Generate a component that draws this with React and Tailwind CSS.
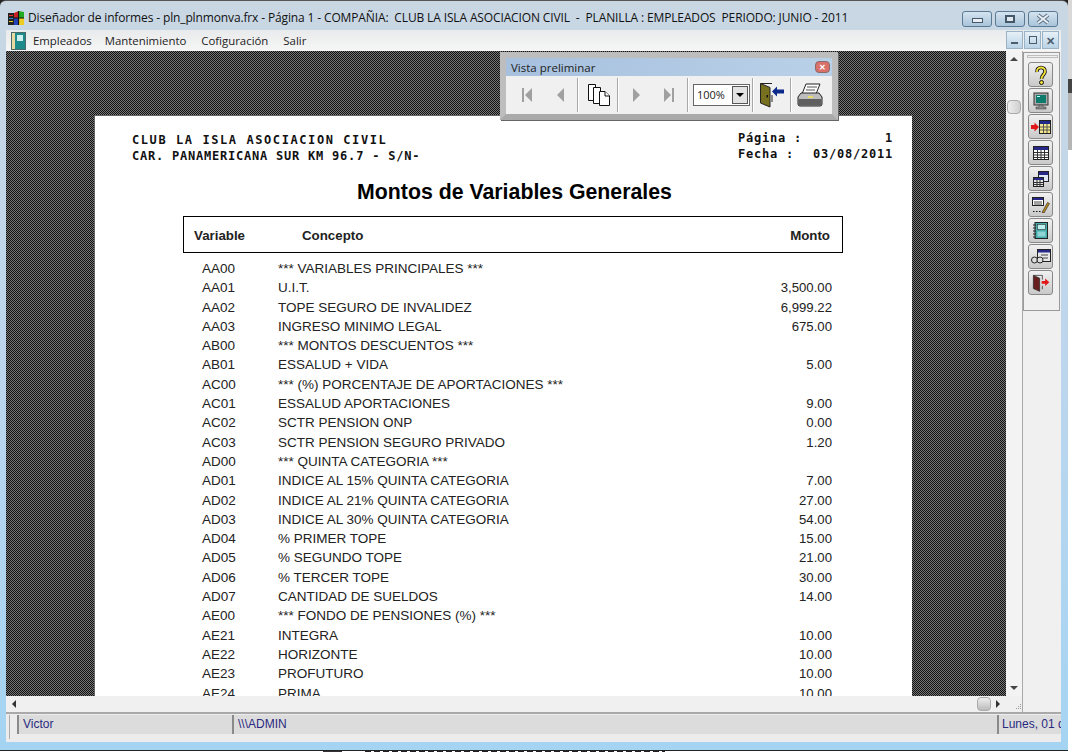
const rows = [
  ['AA00', '*** VARIABLES PRINCIPALES ***', ''],
  ['AA01', 'U.I.T.', '3,500.00'],
  ['AA02', 'TOPE SEGURO DE INVALIDEZ', '6,999.22'],
  ['AA03', 'INGRESO MINIMO LEGAL', '675.00'],
  ['AB00', '*** MONTOS DESCUENTOS ***', ''],
  ['AB01', 'ESSALUD + VIDA', '5.00'],
  ['AC00', '*** (%) PORCENTAJE DE APORTACIONES ***', ''],
  ['AC01', 'ESSALUD APORTACIONES', '9.00'],
  ['AC02', 'SCTR PENSION ONP', '0.00'],
  ['AC03', 'SCTR PENSION SEGURO PRIVADO', '1.20'],
  ['AD00', '*** QUINTA CATEGORIA ***', ''],
  ['AD01', 'INDICE AL 15% QUINTA CATEGORIA', '7.00'],
  ['AD02', 'INDICE AL 21% QUINTA CATEGORIA', '27.00'],
  ['AD03', 'INDICE AL 30% QUINTA CATEGORIA', '54.00'],
  ['AD04', '% PRIMER TOPE', '15.00'],
  ['AD05', '% SEGUNDO TOPE', '21.00'],
  ['AD06', '% TERCER TOPE', '30.00'],
  ['AD07', 'CANTIDAD DE SUELDOS', '14.00'],
  ['AE00', '*** FONDO DE PENSIONES (%) ***', ''],
  ['AE21', 'INTEGRA', '10.00'],
  ['AE22', 'HORIZONTE', '10.00'],
  ['AE23', 'PROFUTURO', '10.00'],
  ['AE24', 'PRIMA', '10.00'],
];

const hatch = 'bg-[repeating-conic-gradient(#111_0%_25%,#777_0%_50%)] bg-[length:2px_2px]';

const WinLogo = () => (
  <svg width="17" height="15" viewBox="0 0 17 15">
    <rect x="0" y="2" width="6" height="12" fill="#222" />
    <rect x="1" y="4" width="4" height="1" fill="#e33" />
    <rect x="1" y="7" width="4" height="1" fill="#38c" />
    <rect x="1" y="10" width="4" height="1" fill="#ec3" />
    <path d="M6 2 L11 0 V7 H6Z" fill="#c22" />
    <path d="M11 0 L16 1 V7 H11Z" fill="#2a2" />
    <path d="M6 7 H11 V14 L6 14Z" fill="#24b" />
    <path d="M11 7 H16 V14 H11Z" fill="#ec2" />
    <path d="M10.5 0 V14 M6 7 H16" stroke="#111" strokeWidth="1.2" />
  </svg>
);

const BookIcon = () => (
  <svg width="15" height="18" viewBox="0 0 15 18">
    <rect x=".5" y=".5" width="14" height="17" fill="#1f8a8c" stroke="#4a6a6a" />
    <rect x="1" y="1" width="3" height="16" fill="#e8d9a0" />
    <rect x="6" y="3" width="6" height="6" fill="#cfeeee" />
  </svg>
);

// navegacion de la vista preliminar
const NavIcon = ({ dir, bar }) => (
  <svg width="14" height="16" viewBox="0 0 14 16">
    {dir === 'left' ? <path d="M11 1 V15 L4 8Z" fill="#a0a0a0" /> : <path d="M3 1 V15 L10 8Z" fill="#a0a0a0" />}
    {bar && <rect x={dir === 'left' ? 1 : 11} y="1" width="2" height="14" fill="#a0a0a0" />}
  </svg>
);

const PagesIcon = () => (
  <svg width="24" height="24" viewBox="0 0 24 24" fill="#fff" stroke="#111">
    <path d="M1.5 1.5 H8.5 V17.5 H1.5Z" />
    <path d="M6.5 4.5 H13.5 V20.5 H6.5Z" />
    <path d="M12.5 8.5 H18 L22.5 13 V22.5 H12.5Z" />
    <path d="M18 8.5 V13 H22.5" />
  </svg>
);

const DoorIcon = () => (
  <svg width="26" height="26" viewBox="0 0 26 26">
    <path d="M1.5 1.5 H13 M13 13 V20" fill="none" stroke="#222" />
    <path d="M1.5 1.5 L11 5.5 V25 L1.5 21Z" fill="#77701f" stroke="#222" />
    <rect x="7.500" y="13" width="1.500" height="2.500" fill="#111" />
    <path d="M13 9.500 L18 4.500 V7.500 H25 V11.500 H18 V14.500Z" fill="#0c2a8c" />
  </svg>
);

const PrinterIcon = () => (
  <svg width="26" height="24" viewBox="0 0 26 24">
    <path d="M9 1 H23 L19 11 H5Z" fill="#fff" stroke="#222" />
    <path d="M10 4 H20 M9 7 H18" stroke="#555" />
    <path d="M4 10 H22 L25 14 V21 Q25 23 23 23 H3 Q1 23 1 21 V14Z" fill="#bdbdbd" stroke="#222" />
    <rect x="1.500" y="16" width="23" height="6.500" rx="1" fill="#5f5f5f" />
    <rect x="11" y="13" width="5" height="2" fill="#e6dc6a" />
  </svg>
);

const Sep = () => <div className="w-[2px] h-[34px] border-l border-[#a8a8a8] border-r-white border-r" />;

const sideIcons = [
  <svg key="help" width="16" height="20" viewBox="0 0 16 20"><path d="M4 7 C3 1 13 1 12 7 C11.500 10 8.500 10 8.500 14" fill="none" stroke="#111" strokeWidth="3.600" /><path d="M4 7 C3 1 13 1 12 7 C11.500 10 8.500 10 8.500 14" fill="none" stroke="#f2e23a" strokeWidth="1.800" /><circle cx="8.500" cy="17.500" r="2" fill="#f2e23a" stroke="#111" /></svg>,
  <svg key="pc" width="18" height="18" viewBox="0 0 18 18"><rect x="2" y="1" width="14" height="12" fill="#a9a9a9" stroke="#333" /><rect x="4" y="3" width="10" height="8" fill="#0d7b6c" /><rect x="5" y="4" width="3" height="1" fill="#bff" /><path d="M7 13 H11 V15 H14 V17 H4 V15 H7Z" fill="#8a8a8a" stroke="#444" strokeWidth=".6" /></svg>,
  <svg key="add" width="20" height="14" viewBox="0 0 20 14"><rect x="8.500" y=".5" width="11" height="13" fill="#f4e98a" stroke="#222" /><rect x="9" y="1" width="10" height="3" fill="#1f2a8a" /><path d="M9 7 H19 M9 10 H19 M12.500 4 V13 M16 4 V13" stroke="#555" /><path d="M8 7 L3.500 2.500 V5 H0 V9 H3.500 V11.500Z" fill="#e01818" /></svg>,
  <svg key="table" width="16" height="14" viewBox="0 0 16 14"><rect x=".5" y=".5" width="15" height="13" fill="#fff" stroke="#222" /><rect x="1" y="1" width="14" height="3" fill="#27278a" /><path d="M1 6.500 H15 M1 9 H15 M1 11.500 H15 M4.500 4 V13 M8 4 V13 M11.500 4 V13" stroke="#333" /></svg>,
  <svg key="tables" width="16" height="16" viewBox="0 0 16 16"><rect x="5.500" y=".5" width="10" height="10" fill="#dfe6f6" stroke="#222" /><rect x="6" y="1" width="9" height="3" fill="#27278a" /><rect x=".5" y="6.500" width="10" height="9" fill="#e6e6e6" stroke="#222" /><rect x="1" y="7" width="9" height="2" fill="#27278a" /><path d="M1 11.500 H10 M1 13.500 H10 M4 9 V15 M7 9 V15" stroke="#333" /></svg>,
  <svg key="edit" width="18" height="16" viewBox="0 0 18 16"><rect x=".5" y=".5" width="11" height="8" fill="#fff" stroke="#222" /><rect x="1" y="1" width="10" height="2" fill="#27278a" /><path d="M2 5 H10 M2 7 H10" stroke="#444" /><path d="M1 14.500 H2.500 M4 14.500 H5.500 M7 14.500 H8.500" stroke="#111" /><path d="M10 15.500 L15.500 5.500 L17.500 6.500 L12 16Z" fill="#b88a1e" stroke="#222" strokeWidth=".6" /></svg>,
  <svg key="note" width="15" height="17" viewBox="0 0 15 17"><rect x="2" y=".5" width="12.500" height="16" fill="#4aa" stroke="#222" /><rect x="4.500" y="2.500" width="8" height="5" fill="#bfeeee" stroke="#333" strokeWidth=".6" /><rect x="4.500" y="9.500" width="8" height="5" fill="#8fd4d4" /><path d="M0 3 H3 M0 6 H3 M0 9 H3 M0 12 H3 M0 15 H3" stroke="#222" /></svg>,
  <svg key="chart" width="20" height="15" viewBox="0 0 20 15"><rect x="6.500" y=".5" width="13" height="12" fill="#e8e8e8" stroke="#222" /><rect x="7" y="1" width="12" height="2.500" fill="#27278a" /><path d="M10 6 H17 M12 9 H17" stroke="#444" /><circle cx="3.500" cy="11" r="3" fill="#ddd" stroke="#222" /><circle cx="9" cy="11" r="3" fill="#ddd" stroke="#222" /></svg>,
  <svg key="exit" width="18" height="20" viewBox="0 0 26 26"><path d="M2 2 H15 V8 M15 17 V22" fill="none" stroke="#222" /><path d="M2 2 L11 6 V25 L2 21Z" fill="#6a1f1f" stroke="#222" /><path d="M25 12 L19 6.500 V10 H14 V14 H19 V17.500Z" fill="#e01818" /></svg>,
];

export default function App() {
  return (
    <div className="w-[1072px] h-[752px] overflow-hidden bg-white font-['Liberation_Sans',sans-serif] relative flex flex-col">
      <div className="h-[751px] flex shrink-0 bg-[#222]">
        {/* marco de la ventana */}
        <div className="w-[1068px] h-[751px] rounded-t-md bg-gradient-to-b from-[#c9d7e3] via-[#bcd6ee] to-[#a4d4f2] pl-[6px] pr-[7px] pb-[8px] flex flex-col border-t border-b border-t-[#555] border-b-[#222]">
          <div className="h-[29px] flex items-center shrink-0 pt-[5px]">
            <div className="ml-[2px] flex"><WinLogo /></div>
            <span className="ml-[3px] text-[12px] text-[#111] font-['Open_Sans',sans-serif] whitespace-nowrap tracking-[-0.135px]">
              Diseñador de informes - pln_plnmonva.frx - Página 1 - COMPAÑIA:&nbsp; CLUB LA ISLA ASOCIACION CIVIL &nbsp;-&nbsp; PLANILLA : EMPLEADOS&nbsp; PERIODO: JUNIO - 2011
            </span>
            <div className="ml-auto mr-[3px] mt-[1px] flex gap-[3px]">
              {['min', 'max', 'close'].map((b) => (
                <div key={b} className="w-[30px] h-[16px] rounded-[3px] border border-[#5a7a94] bg-gradient-to-b from-[#d4e3ef] to-[#a9c4da] flex items-center justify-center">
                  {b === 'min' && <div className="w-[11px] h-[5px] mt-[4px] bg-[#e8eef3] border border-[#44586a]" />}
                  {b === 'max' && <div className="w-[10px] h-[8px] border-2 border-[#44586a] bg-[#dfe8ef]" />}
                  {b === 'close' && (
                    <svg width="16" height="12" viewBox="0 0 16 12">
                      <path d="M3 2 L13 10 M13 2 L3 10" stroke="#5a7184" strokeWidth="4" />
                      <path d="M3 2 L13 10 M13 2 L3 10" stroke="#e8eef3" strokeWidth="2" />
                    </svg>
                  )}
                </div>
              ))}
            </div>
          </div>

          {/* barra de menu */}
          <div className="h-[21px] shrink-0 bg-gradient-to-b from-[#e9eaeb] to-[#f6f6f6] flex items-center text-[11.400px] text-[#222] font-['Open_Sans',sans-serif]">
            <div className="ml-[5px] w-[22px] flex"><BookIcon /></div>
            <span>Empleados</span>
            <span className="ml-[13px]">Mantenimiento</span>
            <span className="ml-[15px]">Cofiguración</span>
            <span className="ml-[15px]">Salir</span>
            <div className="ml-auto flex gap-px self-start mr-[2px]">
              {['_', 'r', 'x'].map((b) => (
                <div key={b} className="w-[17px] h-[18px] mt-[1px] bg-gradient-to-b from-[#e6f0f8] to-[#b9d3e6] border border-[#9ab3c6] flex items-center justify-center text-[#4b5d6b]">
                  {b === '_' && <div className="w-[7px] h-[2px] mt-[6px] bg-[#4b5d6b]" />}
                  {b === 'r' && <div className="w-[8px] h-[8px] border border-[#4b5d6b]" />}
                  {b === 'x' && <span className="text-[11px] leading-none font-bold">✕</span>}
                </div>
              ))}
            </div>
          </div>

          <div className="flex-1 min-h-0 flex bg-[#f0f0f0]">
            <div className="w-[1016px] shrink-0 flex flex-col">
              <div className="flex-1 min-h-0 flex">
                {/* area con la hoja */}
                <div className={`flex-1 min-w-0 flex overflow-hidden pt-[64px] pl-[88px] ${hatch}`}>
                  <div className="w-[818px] h-[700px] shrink-0 bg-white border-t border-l border-black/60 text-black">
                    <div className="flex justify-between pl-[37px] pr-[19px] pt-[16px] font-['DejaVu_Sans_Mono',monospace] font-bold text-[12px] leading-[16px] text-[#111]">
                      <div>
                        <div className="tracking-[1.58px]">CLUB LA ISLA ASOCIACION CIVIL</div>
                        <div className="tracking-[0.78px]">CAR. PANAMERICANA SUR KM 96.7 - S/N-</div>
                      </div>
                      <div className="mt-[-2px] w-[155px] tracking-[0.78px]">
                        <div className="flex justify-between"><span>Página :</span><span>1</span></div>
                        <div className="flex justify-between"><span>Fecha :</span><span>03/08/2011</span></div>
                      </div>
                    </div>
                    <div className="text-center text-[21.300px] font-bold leading-[24px] mt-[16px] pl-[22px]">Montos de Variables Generales</div>
                    <div className="ml-[88px] w-[660px] h-[37px] mt-[12px] pt-[3px] border border-black flex items-center text-[13.300px] font-bold text-[#222] px-[10px]">
                      <span className="w-[108px]">Variable</span>
                      <span className="flex-1">Concepto</span>
                      <span className="mr-[2px]">Monto</span>
                    </div>
                    <div className="ml-[107px] w-[630px] mt-[6px] text-[13.500px] leading-[19.300px] text-[#222]">
                      {rows.map((r) => (
                        <div key={r[0]} className="flex">
                          <span className="w-[76px]">{r[0]}</span>
                          <span className="flex-1">{r[1]}</span>
                          <span className="text-[13.200px]">{r[2]}</span>
                        </div>
                      ))}
                    </div>
                  </div>
                </div>
                {/* scroll vertical */}
                <div className="w-[16px] shrink-0 bg-[#f3f3f3] flex flex-col items-center">
                  <div className="mt-[6px] w-0 h-0 border-x-[4px] border-x-transparent border-b-[4px] border-b-[#444]" />
                  <div className="mt-[39px] w-[14px] h-[14px] rounded-sm bg-gradient-to-r from-[#eee] to-[#cfcfcf] border border-[#aaa]" />
                  <div className="mt-auto mb-[6px] w-0 h-0 border-x-[4px] border-x-transparent border-t-[4px] border-t-[#444]" />
                </div>
              </div>
              {/* scroll horizontal */}
              <div className="h-[16px] shrink-0 bg-[#f0f0f0] flex items-center pl-[6px]">
                <div className="w-0 h-0 border-y-[4px] border-y-transparent border-r-[4px] border-r-[#333]" />
                <div className="ml-auto w-[14px] h-[14px] rounded-sm bg-gradient-to-b from-[#eee] to-[#bbb] border border-[#aaa]" />
                <div className="ml-[5px] w-0 h-0 border-y-[4px] border-y-transparent border-l-[4px] border-l-[#333]" />
                <svg className="ml-[14px] mt-[6px]" width="8" height="8" viewBox="0 0 8 8">
                  <path d="M6 1 h1 v1 h-1Z M4 3 h1 v1 h-1Z M6 3 h1 v1 h-1Z M2 5 h1 v1 h-1Z M4 5 h1 v1 h-1Z M6 5 h1 v1 h-1Z" fill="#999" />
                </svg>
              </div>
            </div>
            {/* barra lateral */}
            <div className="flex-1 min-w-0 bg-[#f0f0f0] border-l border-[#aaa]">
              <div className="w-[37px] h-[259px] mt-[1px] border border-[#9a9a9a] flex flex-col pl-[4px] pt-[2px]">
                <div className="w-[31px] -ml-[1px] h-[3px] border border-[#bdbdbd] mb-[4px]" />
                <div className="flex flex-col gap-[1px]">
                  {sideIcons.map((icon) => (
                    <div key={icon.key} className="w-[25px] h-[25px] rounded-[3px] border border-[#888] bg-gradient-to-b from-[#f1f1f1] to-[#c9c9c9] flex items-center justify-center">
                      {icon}
                    </div>
                  ))}
                </div>
              </div>
            </div>
          </div>

          {/* barra de estado */}
          <div className="h-[30px] shrink-0 bg-[#ececec] border-t-2 border-[#a9a9a9] flex text-[12px] text-[#2a2a80] pl-[3px] pt-px">
            <div className="w-[8px] h-[24px] border-l border-[#aaa]" />
            <div className="h-[19px] flex-1 flex bg-[#dcdcdc]">
              <div className="w-[215px] border-l-2 border-[#8a8a8a] pl-[4px] leading-[18px]">Victor</div>
              <div className="flex-1 border-l-2 border-[#8a8a8a] pl-[4px] leading-[18px]">\\\ADMIN</div>
              <div className="w-[64px] border-l-2 border-[#8a8a8a] pl-[3px] leading-[18px] overflow-hidden whitespace-nowrap">Lunes, 01 de</div>
            </div>
          </div>
        </div>

        {/* otra ventana detras */}
        <div className="flex-1 flex flex-col">
          <div className="h-[79px] bg-[#d8d8d8]" />
          <div className="h-[14px] bg-[#444]" />
          <div className="h-[57px] bg-[#b5b5b5]" />
          <div className="flex-1 bg-white" />
        </div>
      </div>
      <div className="h-px flex">
        <div className="ml-[323px] w-[19px] bg-[#333]" />
        <div className="ml-[23px] w-[300px] bg-[repeating-linear-gradient(90deg,#222_0_6px,#fff_6px_9px)]" />
      </div>

      {/* ventana flotante de la vista preliminar */}
      <div className="absolute left-[500px] top-[52px] w-[338px] h-[68px] bg-[#f0f0f0] border-[6px] border-[#bdbdbd] border-b-[#aaa] shadow-[1px_1px_0_#666]">
        <div className="h-[18px] bg-gradient-to-r from-[#a7c0de] to-[#b9d1e8] flex items-center justify-between pl-[5px] pr-[2px] text-[11.500px] text-[#222] font-['Open_Sans',sans-serif]">
          <span className="mt-px">Vista preliminar</span>
          <div className="w-[15px] h-[12px] rounded-sm bg-[#d9706a] border border-[#8a6a6a] flex items-center justify-center text-white text-[8px] leading-none font-bold">✕</div>
        </div>
        <div className="h-[38px] flex items-center pl-[15px]">
          <NavIcon dir="left" bar />
          <div className="w-[18px]" />
          <NavIcon dir="left" />
          <div className="w-[10px]" />
          <Sep />
          <div className="w-[8px]" />
          <PagesIcon />
          <div className="w-[6px]" />
          <Sep />
          <div className="w-[11px]" />
          <NavIcon dir="right" />
          <div className="w-[17px]" />
          <NavIcon dir="right" bar />
          <div className="w-[12px]" />
          <Sep />
          <div className="w-[4px]" />
          <div className="w-[57px] h-[22px] border border-[#666] bg-white flex items-center justify-between pl-[3px] pr-px text-[11px] text-[#222] font-['Open_Sans',sans-serif]">
            <span>100%</span>
            <div className="w-[16px] h-[18px] bg-[#e2e2e2] border border-[#555] flex items-center justify-center">
              <div className="w-0 h-0 border-x-[4px] border-x-transparent border-t-[4px] border-t-black" />
            </div>
          </div>
          <div className="w-[2px]" />
          <Sep />
          <div className="w-[5px]" />
          <DoorIcon />
          <div className="w-[5px]" />
          <Sep />
          <div className="w-[5px]" />
          <PrinterIcon />
        </div>
      </div>
    </div>
  );
}
